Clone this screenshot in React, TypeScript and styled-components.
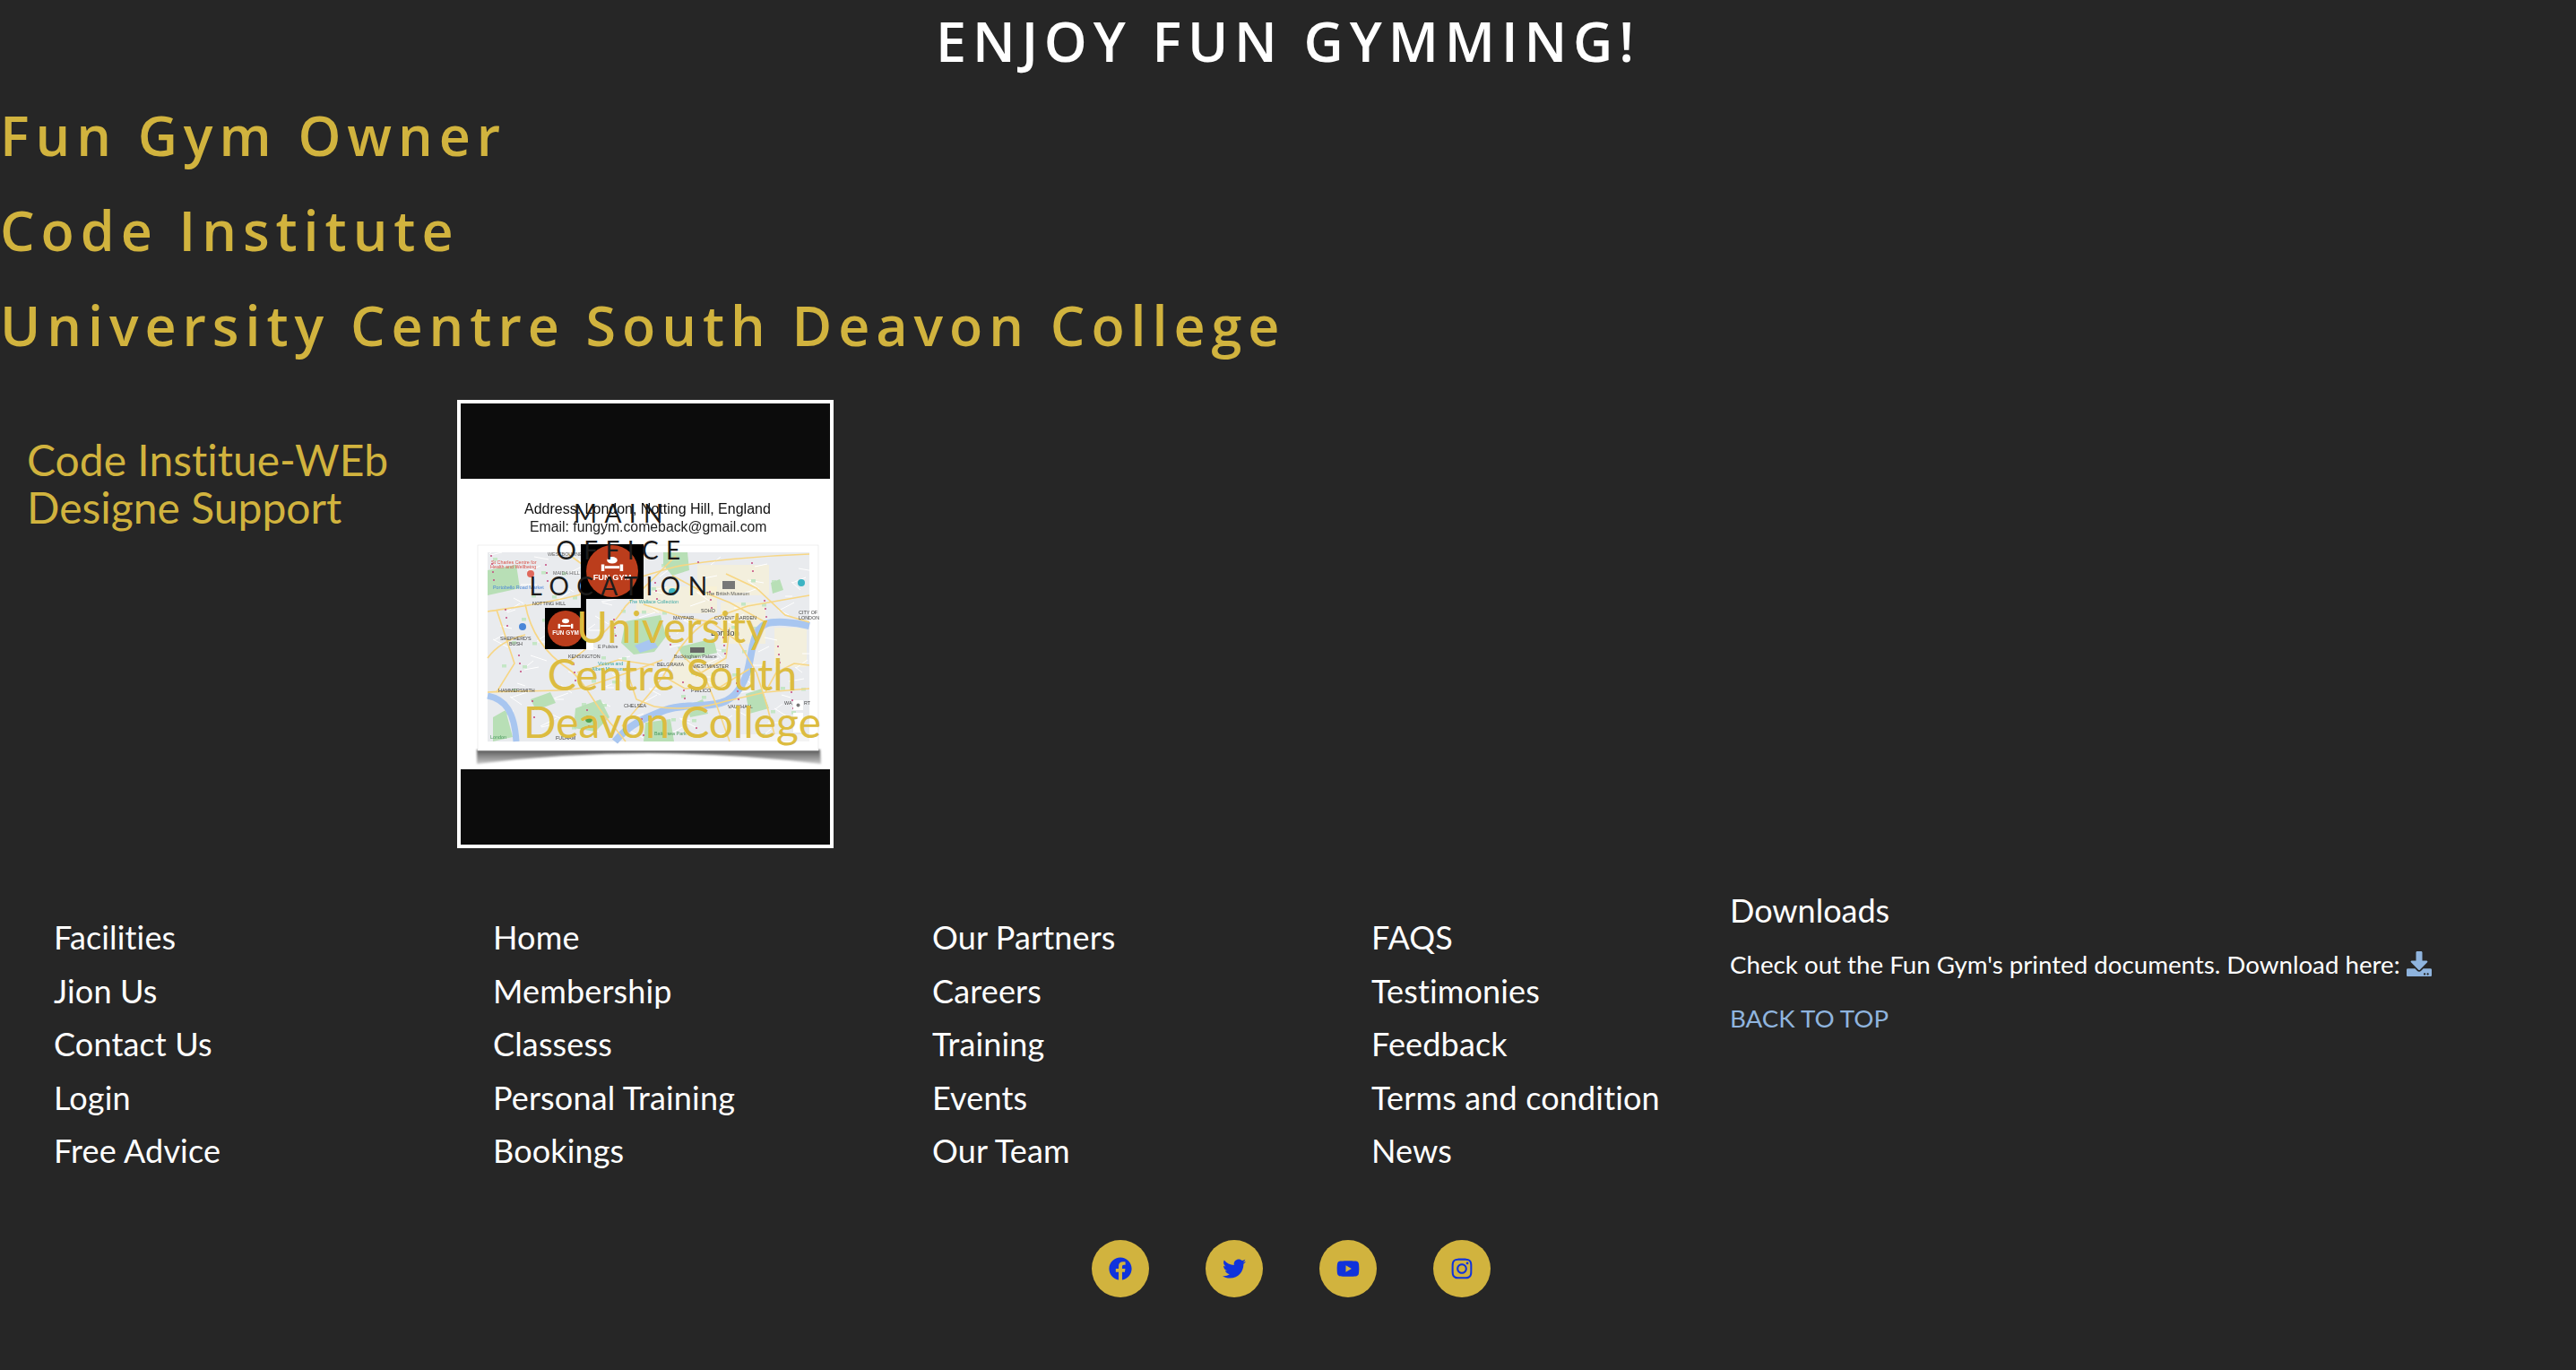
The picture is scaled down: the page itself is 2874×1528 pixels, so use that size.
// App.tsx
import React from 'react';
import styled, { createGlobalStyle } from 'styled-components';
import { FaFacebook, FaTwitter, FaYoutube, FaInstagram, FaDownload } from 'react-icons/fa';

const GOLD = '#d1b33e';

const GlobalStyle = createGlobalStyle`
  html, body {
    margin: 0;
    padding: 0;
    background-color: #262626;
    font-family: "Lato", "Liberation Sans", sans-serif;
    font-variant-ligatures: none;
  }
`;

const Page = styled.div`
  width: 2874px;
  min-height: 1528px;
  background-color: #262626;
`;

const Title = styled.h1`
  margin: 0;
  height: 92px;
  line-height: 92px;
  text-align: center;
  font-family: "Open Sans", sans-serif;
  font-size: 61px;
  font-weight: 600;
  letter-spacing: 6.9px;
  color: #fff;
`;

const Credits = styled.div`
  display: flex;
  flex-direction: column;
  gap: 22px;
  margin-top: 17px;
`;

const Credit = styled.h2`
  margin: 0;
  height: 84px;
  line-height: 84px;
  font-family: "Open Sans", sans-serif;
  font-size: 61px;
  font-weight: 600;
  letter-spacing: 6.95px;
  color: ${GOLD};
`;

const Support = styled.section`
  display: flex;
  margin-top: 41px;
`;

const SupportText = styled.p`
  margin: 40px 0 0;
  padding-left: 30px;
  width: 480px;
  font-size: 48px;
  line-height: 53px;
  color: ${GOLD};
`;

const MapCard = styled.div`
  position: relative;
  width: 420px;
  height: 500px;
  box-sizing: border-box;
  border: 4px solid #fff;
  background: #fff;
`;

const MapPicture = styled.svg`
  display: block;
  width: 412px;
  height: 492px;
`;

const OfficeCaption = styled.div`
  position: absolute;
  left: 60px;
  top: 102px;
  width: 240px;
  text-align: center;
  font-size: 28px;
  line-height: 40.5px;
  letter-spacing: 8.4px;
  color: #1c1c1c;
`;

const CollegeCaption = styled.div`
  position: absolute;
  left: 66px;
  top: 222px;
  width: 340px;
  text-align: center;
  font-size: 48px;
  line-height: 53px;
  color: #dcbc40;
`;

const FooterGrid = styled.footer`
  display: grid;
  grid-template-columns: 490px 490px 490px 400px 1fr;
  margin-top: 39px;
  padding-left: 60px;
`;

const LinkList = styled.ul`
  list-style: none;
  margin: 31px 0 0;
  padding: 0;
`;

const LinkItem = styled.li`
  height: 59.6px;
  line-height: 59.6px;
  font-size: 36px;
  letter-spacing: 0.15px;
  color: #fff;
`;

const Downloads = styled.div`
  color: #fff;
`;

const DownloadsTitle = styled.h5`
  margin: 0;
  height: 61px;
  line-height: 60px;
  font-size: 36px;
  font-weight: 400;
`;

const DownloadsText = styled.p`
  margin: 0;
  height: 60px;
  line-height: 60px;
  font-size: 27.7px;
`;

const DownloadIcon = styled(FaDownload)`
  color: #8fb4de;
  font-size: 28px;
  vertical-align: -3px;
`;

const BackToTop = styled.a`
  display: block;
  height: 60px;
  line-height: 60px;
  font-size: 27.7px;
  color: #8fb4de;
`;

const SocialRow = styled.div`
  display: flex;
  justify-content: center;
  gap: 63px;
  margin-top: 69px;
  padding-left: 7px;
`;

const SocialButton = styled.a`
  display: flex;
  align-items: center;
  justify-content: center;
  width: 64px;
  height: 64px;
  border-radius: 50%;
  background-color: ${GOLD};
  color: #1033dc;
  font-size: 26px;
`;

const footerColumns = [
  ['Facilities', 'Jion Us', 'Contact Us', 'Login', 'Free Advice'],
  ['Home', 'Membership', 'Classess', 'Personal Training', 'Bookings'],
  ['Our Partners', 'Careers', 'Training', 'Events', 'Our Team'],
  ['FAQS', 'Testimonies', 'Feedback', 'Terms and condition', 'News'],
];

const mapLabels: [string, number, number, string?, number?][] = [
  ['NOTTING HILL', 80, 225],
  ['KENSINGTON', 120, 284],
  ['HAMMERSMITH', 42, 322],
  ["SHEPHERD'S", 44, 264],
  ['BUSH', 54, 270],
  ['CHELSEA', 182, 339],
  ['MAYFAIR', 237, 241],
  ['SOHO', 268, 233],
  ['COVENT GARDEN', 283, 241],
  ['BELGRAVIA', 219, 293],
  ['WESTMINSTER', 259, 295],
  ['London', 279, 259, '#333', 9.5],
  ['PIMLICO', 257, 322],
  ['VAUXHALL', 298, 340],
  ['Buckingham Palace', 238, 284, '#555'],
  ['The British Museum', 274, 214, '#555'],
  ['The Wallace Collection', 188, 223, '#3aa6a6'],
  ['Portobello Road Market', 36, 207, '#4a86d8'],
  ['St Charles Centre for', 34, 179, '#d9534a'],
  ['Health and Wellbeing', 33, 184, '#d9534a'],
  ['MAIDA HILL', 103, 191, '#666'],
  ['WESTBOURNE', 97, 170, '#666'],
  ['Victoria and', 153, 292, '#3aa6a6'],
  ['Albert Museum', 146, 298, '#3aa6a6'],
  ['CITY OF', 377, 235],
  ['LONDON', 377, 241],
  ['Battersea Park', 216, 370, '#4c9a5f'],
  ['E Pulsive', 153, 273, '#555'],
  ['WA', 361, 336],
  ['RT', 383, 336],
  ['FULHAM', 106, 375],
  ['London', 33, 374, '#4c9a5f'],
];

const parks: string[] = [
  'M184 243 L223 236 L229 260 L216 277 L193 280 L179 267 Z',
  'M226 166 H253 L255 186 L236 192 L226 180 Z',
  'M242 272 L282 262 L286 278 L250 286 Z',
  'M206 356 L234 352 L238 377 H204 Z',
  'M30 186 L62 180 L66 206 L30 214 Z',
  'M128 340 L156 330 L166 350 L150 366 L126 362 Z',
  'M36 350 L50 342 L58 372 L36 377 Z',
  'M78 330 L100 322 L106 334 L84 342 Z',
  'M318 324 L336 318 L344 340 L322 346 Z',
  'M252 338 L270 330 L276 346 L256 350 Z',
  'M346 200 L356 196 L360 208 L348 212 Z',
];

const roads: string[] = [
  'M30 232 C70 226 90 224 130 214 C170 204 210 190 240 182 C270 176 330 170 389 168',
  'M30 322 C70 320 120 322 140 316 C170 306 200 296 225 286',
  'M72 224 C78 256 96 280 120 296 C140 310 150 340 172 362 L184 377',
  'M120 288 C140 276 170 248 184 226 L210 200 L240 170',
  'M180 360 C196 340 210 326 226 304 L240 280 C250 264 262 250 280 240 L320 226 L389 214',
  'M216 338 C240 342 270 340 296 332 L340 322 L389 318',
  'M204 224 L246 238 L280 244 L310 266 L330 300 L342 338 L352 377',
  'M30 284 C40 270 56 262 72 258',
  'M246 280 L272 304 L286 338 L300 377',
  'M296 190 L330 206 L362 236 L389 244',
  'M120 168 L150 190 L132 214',
  'M226 304 L250 318 L290 316 L322 296',
  'M340 322 L352 300 L372 290 L389 292',
  'M40 230 L60 290 L40 322',
  'M236 192 L270 210 L300 222 L340 244',
  'M130 300 L176 286 L216 292',
  'M186 300 L196 330 L216 338',
  'M300 250 L296 284 L262 304',
];

const blocks = [
  [196, 204, 90, 30],
  [264, 180, 80, 34],
  [290, 222, 50, 46],
  [236, 286, 60, 30],
  [150, 196, 40, 22],
  [350, 250, 36, 44],
];

const dots = Array.from({ length: 70 }, (_, i) => ({
  x: 34 + ((i * 137) % 350),
  y: 170 + ((i * 71) % 203),
}));

const streets = Array.from({ length: 130 }, (_, i) => {
  const x = 32 + ((i * 53) % 352);
  const y = 168 + ((i * 97) % 205);
  return `M${x} ${y} l${8 + (i % 11)} ${(i % 7) * 3 - 9}`;
});

const greens = Array.from({ length: 55 }, (_, i) => ({
  x: 36 + ((i * 89) % 345),
  y: 172 + ((i * 43) % 198),
}));

const Marker = ({ x, y, w, h, r, dy }: { x: number; y: number; w: number; h: number; r: number; dy: number }) => (
  <g>
    <rect x={x} y={y} width={w} height={h} fill="#000" />
    <circle cx={x + w / 2} cy={y + dy} r={r} fill="#bb3c1b" />
    <g fill="#fff">
      <ellipse cx={x + w / 2} cy={y + dy - r * 0.42} rx={r * 0.2} ry={r * 0.13} />
      <rect x={x + w / 2 - r * 0.28} y={y + dy - r * 0.2} width={r * 0.56} height={r * 0.1} />
      <rect x={x + w / 2 - r * 0.42} y={y + dy - r * 0.26} width={r * 0.12} height={r * 0.26} />
      <rect x={x + w / 2 + r * 0.3} y={y + dy - r * 0.26} width={r * 0.12} height={r * 0.26} />
      <text x={x + w / 2} y={y + dy + r * 0.36} textAnchor="middle" fontFamily="Liberation Sans" fontWeight="700" fontSize={r * 0.32}>
        FUN GYM
      </text>
    </g>
  </g>
);

const LocationPicture = () => (
  <MapPicture viewBox="0 0 412 492">
    <defs>
      <linearGradient id="curl" x1="0" y1="0" x2="0" y2="1">
        <stop offset="0" stopColor="#555" />
        <stop offset="1" stopColor="#c8c8c8" />
      </linearGradient>
      <filter id="soft">
        <feGaussianBlur stdDeviation="0.45" />
      </filter>
      <filter id="softer">
        <feGaussianBlur stdDeviation="1.2" />
      </filter>
    </defs>
    <rect width="412" height="492" fill="#fff" />
    <rect width="412" height="84" fill="#0c0c0c" />
    <rect y="408" width="412" height="84" fill="#0c0c0c" />
    <g filter="url(#soft)">
      <text x="71" y="123" fontFamily="Liberation Sans" fontSize="16" fill="#111">
        Address: London, Notting Hill, England
      </text>
      <text x="77" y="143" fontFamily="Liberation Sans" fontSize="15.8" fill="#222">
        Email: fungym.comeback@gmail.com
      </text>
    </g>
    <path d="M18 386 H401 L402 402 Q210 378 18 402 Z" fill="url(#curl)" filter="url(#softer)" />
    <rect x="19" y="158" width="380" height="229" fill="#fff" stroke="#e4e4e4" strokeWidth="0.6" />
    <g filter="url(#soft)">
      <rect x="30" y="166" width="359" height="211" fill="#e9ebee" />
      {blocks.map(([x, y, w, h]) => (
        <rect key={`${x}-${y}`} x={x} y={y} width={w} height={h} fill="#fbf2cf" opacity="0.55" />
      ))}
      {streets.map((d) => (
        <path key={d} d={d} stroke="#fff" strokeWidth="1" fill="none" />
      ))}
      {greens.map((g) => (
        <rect key={`${g.x}-${g.y}`} x={g.x} y={g.y} width="5" height="3.5" fill="#c4e6c5" />
      ))}
      {parks.map((d) => (
        <path key={d} d={d} fill="#b8dfb6" />
      ))}
      <path
        d="M389 248 C372 244 350 242 340 246 C328 252 326 268 322 290 C318 312 306 330 290 334 C268 340 250 334 228 342 C208 350 190 356 172 377"
        stroke="#a8c6f0"
        strokeWidth="8"
        fill="none"
      />
      <path d="M30 326 C50 330 60 344 62 377" stroke="#a8c6f0" strokeWidth="7" fill="none" />
      <path d="M194 270 L214 262 L220 272 L200 278 Z" fill="#a8c6f0" />
      {roads.map((d) => (
        <path key={d} d={d} stroke="#f7d684" strokeWidth="1.6" fill="none" />
      ))}
      {dots.map((p) => (
        <circle key={`${p.x}-${p.y}`} cx={p.x} cy={p.y} r="1" fill="#c4487e" />
      ))}
      {mapLabels.map(([label, x, y, color, size]) => (
        <text
          key={`${label}-${x}`}
          x={x}
          y={y}
          fontFamily="Liberation Sans"
          fontSize={size ?? 5.4}
          fill={color ?? '#444'}
        >
          {label}
        </text>
      ))}
      <circle cx="78" cy="190" r="4" fill="#e0685c" />
      <circle cx="380" cy="200" r="4" fill="#3bb3c3" />
      <circle cx="236" cy="210" r="4" fill="#3bb3c3" />
      <circle cx="69" cy="249" r="4" fill="#4a86d8" />
      <circle cx="143" cy="352" r="4" fill="#4fa34f" />
      <rect x="292" y="198" width="14" height="9" fill="#777" />
      <rect x="256" y="272" width="16" height="6" fill="#666" />
      <rect x="371" y="331" width="11" height="11" fill="#fff" />
      <circle cx="376.5" cy="336.5" r="2" fill="#777" />
      <rect x="371" y="345" width="11" height="22" fill="#fff" />
      <rect x="140" y="267" width="8" height="8" fill="#fff" />
      <rect x="312" y="369" width="77" height="8" fill="#f4f4f4" />
    </g>
    <g filter="url(#soft)">
      <Marker x={134} y={157} w={70} h={61} r={29} dy={30} />
      <rect x={134} y={216} width={6} height={14} fill="#000" />
      <Marker x={94} y={228} w={46} h={46} r={20} dy={23} />
    </g>
  </MapPicture>
);

const socials = [FaFacebook, FaTwitter, FaYoutube, FaInstagram];

const App = () => {
  return (
    <Page>
      <GlobalStyle />
      <Title>ENJOY FUN GYMMING!</Title>
      <Credits>
        <Credit>Fun Gym Owner</Credit>
        <Credit>Code Institute</Credit>
        <Credit>University Centre South Deavon College</Credit>
      </Credits>
      <Support>
        <SupportText>Code Institue-WEb Designe Support</SupportText>
        <MapCard>
          <LocationPicture />
          <OfficeCaption>MAIN OFFICE LOCATION</OfficeCaption>
          <CollegeCaption>University Centre South Deavon College</CollegeCaption>
        </MapCard>
      </Support>
      <FooterGrid>
        {footerColumns.map((column) => (
          <LinkList key={column[0]}>
            {column.map((label) => (
              <LinkItem key={label}>{label}</LinkItem>
            ))}
          </LinkList>
        ))}
        <Downloads>
          <DownloadsTitle>Downloads</DownloadsTitle>
          <DownloadsText>
            Check out the Fun Gym's printed documents. Download here: <DownloadIcon />
          </DownloadsText>
          <BackToTop>BACK TO TOP</BackToTop>
        </Downloads>
      </FooterGrid>
      <SocialRow>
        {socials.map((Icon, index) => (
          <SocialButton key={index}>
            <Icon />
          </SocialButton>
        ))}
      </SocialRow>
    </Page>
  );
};

export default App;
